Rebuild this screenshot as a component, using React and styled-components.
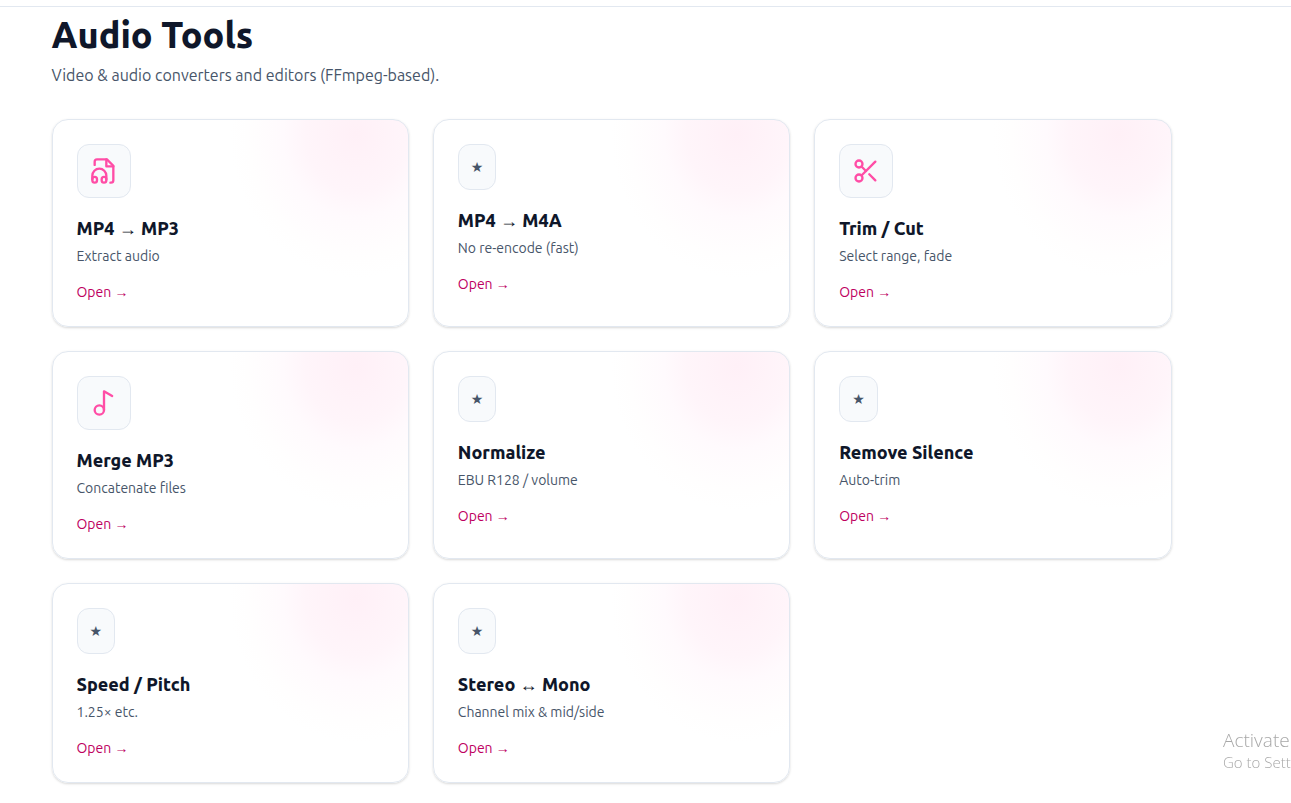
import React from 'react';
import styled, { createGlobalStyle } from 'styled-components';
import { Scissors } from 'lucide-react';

const tools = [
	{ title: 'MP4 → MP3', desc: 'Extract audio', icon: 'headphones' },
	{ title: 'MP4 → M4A', desc: 'No re-encode (fast)' },
	{ title: 'Trim / Cut', desc: 'Select range, fade', icon: 'scissors' },
	{ title: 'Merge MP3', desc: 'Concatenate files', icon: 'note' },
	{ title: 'Normalize', desc: 'EBU R128 / volume' },
	{ title: 'Remove Silence', desc: 'Auto-trim' },
	{ title: 'Speed / Pitch', desc: '1.25× etc.' },
	{ title: 'Stereo ↔ Mono', desc: 'Channel mix & mid/side' },
];

function ToolIcon({ name }) {
	if (name === 'scissors') return <Scissors size={28} />;
	if (name === 'headphones') {
		return (
			<LineSvg viewBox="0 0 24 24">
				<path d="M4 6.8V4a2 2 0 0 1 2-2h8.5L20 7.5V20a2 2 0 0 1-2 2h-.5" />
				<path d="M14 2v6h6" />
				<path d="M10 20v-1a2 2 0 1 1 4 0v1a2 2 0 1 1-4 0Zm-4 0v-1a2 2 0 1 0-4 0v1a2 2 0 1 0 4 0Z" />
				<path d="M2 19v-3a6 6 0 0 1 12 0v3" />
			</LineSvg>
		);
	}
	if (name === 'note') {
		return (
			<LineSvg viewBox="0 0 24 24">
				<circle cx="8" cy="18" r="4" />
				<path d="M12 18V2l7 4" />
			</LineSvg>
		);
	}
	return '★';
}

function ToolCard({ tool }) {
	return (
		<Card>
			<IconBox>
				<ToolIcon name={tool.icon} />
			</IconBox>
			<CardTitle>{tool.title}</CardTitle>
			<CardDesc>{tool.desc}</CardDesc>
			<OpenLink href="#">Open →</OpenLink>
		</Card>
	);
}

function App() {
	return (
		<>
			<GlobalStyle />
			<TopBar />
			<Main>
				<Container>
					<Title>Audio Tools</Title>
					<Subtitle>Video &amp; audio converters and editors (FFmpeg-based).</Subtitle>
					<Grid>
						{tools.map((tool) => (
							<ToolCard key={tool.title} tool={tool} />
						))}
					</Grid>
				</Container>
			</Main>
			<Notice>
				<strong>Activate</strong>
				<span>Go to Sett</span>
			</Notice>
		</>
	);
}

export default App;

const GlobalStyle = createGlobalStyle`
	* {
		box-sizing: border-box;
	}
	body {
		margin: 0;
		background-color: #ffffff;
		color: #0f172a;
		font-family: Ubuntu, "Noto Sans", "Liberation Sans", sans-serif;
		font-size: 16px;
		line-height: 24px;
	}
`;

const TopBar = styled.header`
	height: 7px;
	border-bottom: 1px solid #e2e8f0;
`;

const Main = styled.main`
	max-width: 1223px;
	padding: 8px 24px 20px;
`;

const Container = styled.div`
	max-width: 1120px;
	margin: 0 auto;
`;

const Title = styled.h1`
	margin: 0;
	font-size: 36px;
	line-height: 40px;
	font-weight: 800;
`;

const Subtitle = styled.p`
	margin: 8px 0 32px;
	color: #475569;
`;

const Grid = styled.div`
	display: grid;
	grid-template-columns: repeat(3, 1fr);
	gap: 24px;
`;

const Card = styled.article`
	display: flex;
	flex-direction: column;
	align-items: flex-start;
	padding: 24px;
	border: 1px solid #e2e8f0;
	border-radius: 16px;
	background: radial-gradient(
		126px 144px at right 52px top 14px,
		#fff0f7,
		#fff5fa 40%,
		#fffafd 58%,
		#fffefe 86%,
		#ffffff
	);
	box-shadow: 0 1px 3px #0000001a, 0 1px 2px #0000000f;
`;

const IconBox = styled.div`
	display: flex;
	padding: 12px;
	border: 1px solid #e2e8f0;
	border-radius: 12px;
	background-color: #f8fafc;
	color: #475569;
	font-family: "DejaVu Sans", sans-serif;
	font-size: 14px;
	line-height: 20px;
	svg {
		color: #ff4da6;
	}
`;

const LineSvg = styled.svg`
	width: 28px;
	height: 28px;
	fill: none;
	stroke: currentColor;
	stroke-width: 2;
	stroke-linecap: round;
	stroke-linejoin: round;
`;

const CardTitle = styled.h2`
	margin: 16px 0 4px;
	font-size: 18px;
	line-height: 28px;
	font-weight: 800;
`;

const CardDesc = styled.p`
	margin: 0 0 16px;
	color: #475569;
	font-size: 14px;
	line-height: 20px;
`;

const OpenLink = styled.a`
	color: #be005f;
	font-size: 14px;
	line-height: 20px;
	text-decoration: none;
`;

// sits over the page in the bottom right corner
const Notice = styled.aside`
	position: fixed;
	right: 0;
	bottom: 31px;
	width: 68px;
	display: flex;
	flex-direction: column;
	white-space: nowrap;
	color: #a8a8a8;
	font-family: "Open Sans", sans-serif;
	font-size: 15px;
	font-weight: 300;
	line-height: 20px;
	strong {
		font-size: 19px;
		line-height: 24px;
		font-weight: 300;
	}
`;
